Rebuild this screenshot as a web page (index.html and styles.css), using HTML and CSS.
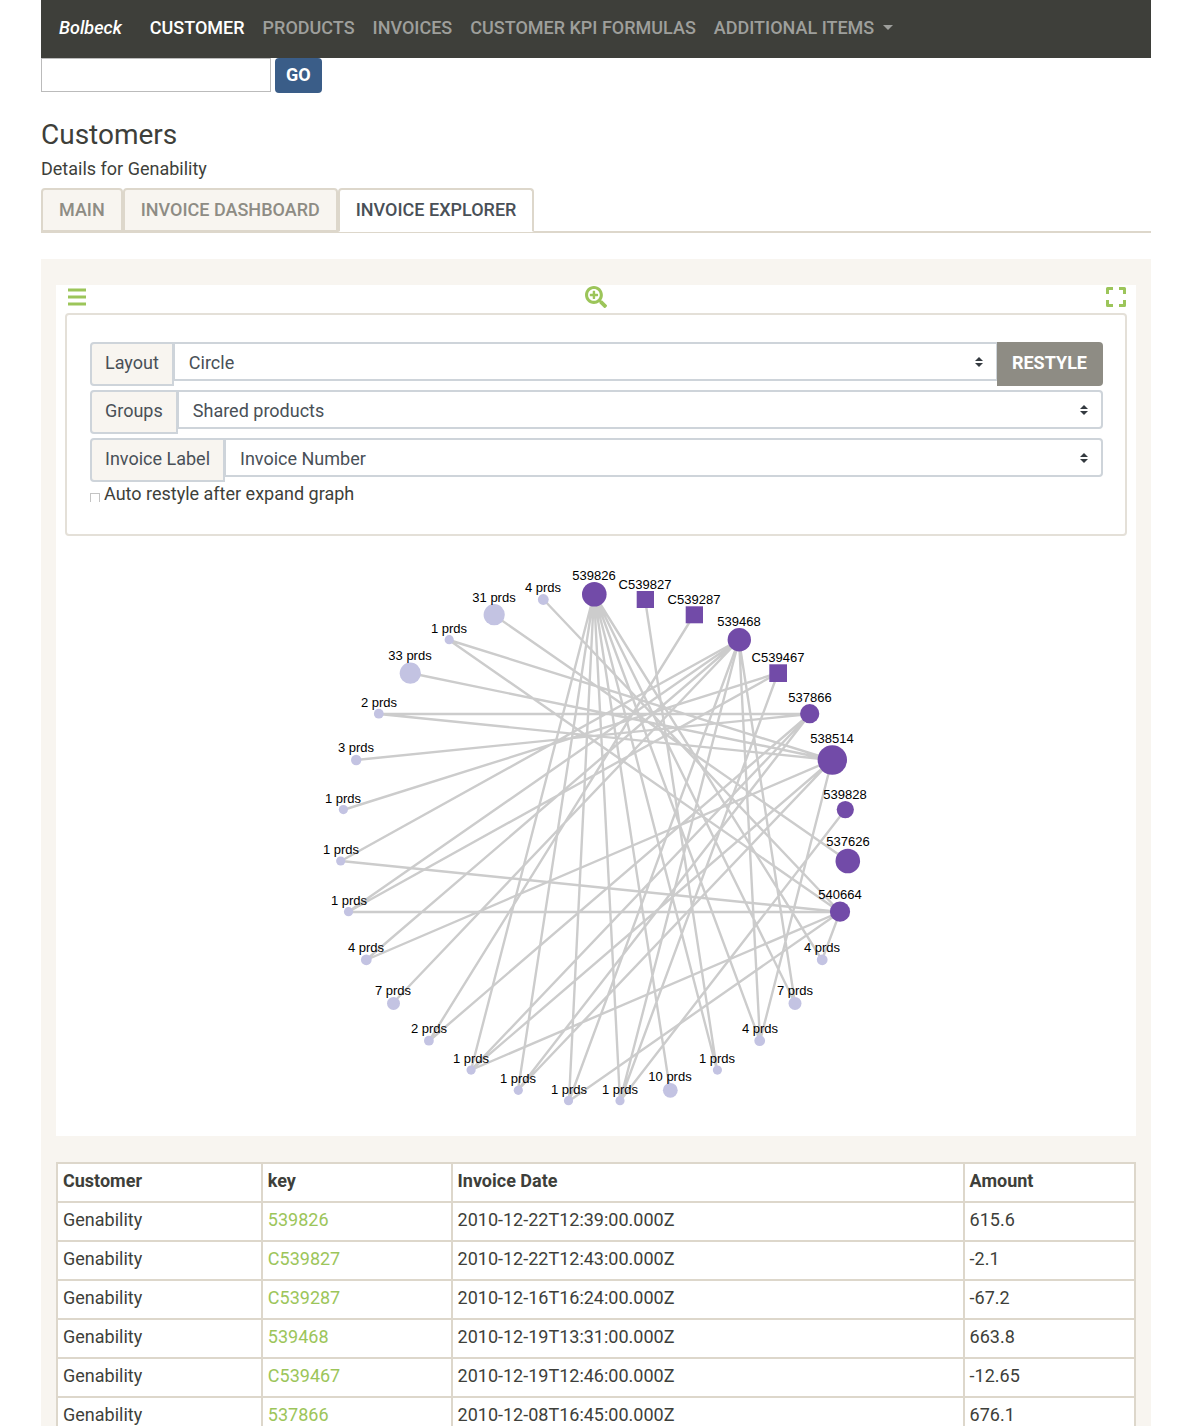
FILE: index.html
```html
<!DOCTYPE html>
<html lang="en">
<head>
<meta charset="utf-8">
<meta name="viewport" content="width=device-width, initial-scale=1">
<title>Bolbeck - Customers</title>
<link rel="stylesheet" href="styles.css">
</head>
<body>
<header>
  <nav class="navbar" aria-label="Main">
    <a class="brand" href="#">Bolbeck</a>
    <a class="nav-link current" href="#">CUSTOMER</a>
    <a class="nav-link" href="#">PRODUCTS</a>
    <a class="nav-link" href="#">INVOICES</a>
    <a class="nav-link" href="#">CUSTOMER KPI FORMULAS</a>
    <a class="nav-link dropdown" href="#">ADDITIONAL ITEMS</a>
  </nav>
  <form class="search">
    <input class="search-box" type="text" aria-label="Search">
    <button class="go" type="button">GO</button>
  </form>
</header>
<main>
  <h1>Customers</h1>
  <p class="subtitle">Details for Genability</p>
  <nav class="tabs" aria-label="Customer views">
    <a class="tab" href="#">MAIN</a>
    <a class="tab" href="#">INVOICE DASHBOARD</a>
    <a class="tab active" href="#">INVOICE EXPLORER</a>
  </nav>
  <section class="panel">
    <div class="explorer">
      <div class="toolbar">
        <button class="tool" type="button" aria-label="Menu"><svg width="18" height="18" viewBox="0 0 18 18"><path d="M0 .5h18v3H0zM0 7.5h18v3H0zM0 14.500h18v3H0z"/></svg></button>
        <button class="tool" type="button" aria-label="Zoom in"><svg width="22" height="22" viewBox="0 0 512 512"><path d="M304 192v32c0 6.600-5.400 12-12 12h-56v56c0 6.600-5.400 12-12 12h-32c-6.600 0-12-5.400-12-12v-56h-56c-6.600 0-12-5.400-12-12v-32c0-6.600 5.400-12 12-12h56v-56c0-6.600 5.400-12 12-12h32c6.600 0 12 5.400 12 12v56h56c6.600 0 12 5.400 12 12zm201 284.700L476.700 505c-9.400 9.400-24.600 9.400-33.900 0L343 405.300c-4.500-4.500-7-10.600-7-17V372c-35.300 27.600-79.700 44-128 44C93.100 416 0 322.900 0 208S93.100 0 208 0s208 93.100 208 208c0 48.300-16.400 92.700-44 128h16.300c6.400 0 12.500 2.500 17 7l99.700 99.700c9.300 9.400 9.300 24.600 0 34zM344 208c0-75.200-60.800-136-136-136S72 132.800 72 208s60.800 136 136 136 136-60.800 136-136z"/></svg></button>
        <button class="tool" type="button" aria-label="Full screen"><svg width="20" height="20" viewBox="0 0 20 20"><path d="M1.500 0H7v3H3v4H0V1.500Q0 0 1.500 0zM13 0h5.500Q20 0 20 1.500V7h-3V3h-4zM0 13h3v4h4v3H1.500Q0 20 0 18.500zM17 13h3v5.500q0 1.500-1.500 1.500H13v-3h4z"/></svg></button>
      </div>
      <form class="options">
        <div class="group">
          <label class="prefix" for="layout">Layout</label>
          <select class="choice" id="layout"><option>Circle</option></select>
          <button class="restyle" type="button">RESTYLE</button>
        </div>
        <div class="group">
          <label class="prefix" for="groups">Groups</label>
          <select class="choice last" id="groups"><option>Shared products</option></select>
        </div>
        <div class="group">
          <label class="prefix" for="label">Invoice Label</label>
          <select class="choice last" id="label"><option>Invoice Number</option></select>
        </div>
        <label class="auto"><input class="tick" type="checkbox">Auto restyle after expand graph</label>
      </form>
      <svg class="graph" viewBox="56 536 1080 600" role="img" aria-label="Invoices and the products they share">
        <g class="edges">
          <path d="M543 599L840 912M494 615L848 861M449 640L832 760M449 640L840 912M410 673L832 760M379 714H810M379 714L832 760M356 760L810 714M343 810L778 673M341 861L739 640M341 861L840 912"/>
          <path d="M348 912L739 640M348 912L778 673M348 912H840M366 960L739 640M366 960L832 760M393 1003L739 640M429 1041L694 615M429 1041L810 714"/>
          <path d="M471 1070L594 594M471 1070L810 714M471 1070L832 760M471 1070L840 912M518 1090L594 594M518 1090L810 714M518 1090L832 760M569 1101L594 594M569 1101L739 640M569 1101L840 912"/>
          <path d="M620 1101L594 594M620 1101L739 640M620 1101L778 673M620 1101L845 810M670 1090L594 594M717 1070L594 594M717 1070L645 599M760 1041L594 594M760 1041L739 640M760 1041L832 760M795 1003L594 594M795 1003L739 640M822 960L594 594M822 960L840 912"/>
        </g>
        <g class="invoices">
          <circle cx="594.300" cy="594.300" r="12.300"/><rect x="636.700" y="591" width="17.300" height="17"/><rect x="685.700" y="606.300" width="17.300" height="17"/>
          <circle cx="739.300" cy="639.700" r="11.700"/><rect x="769.300" y="664.300" width="17.700" height="17.700"/><circle cx="809.700" cy="713.700" r="9.600"/>
          <circle cx="832.300" cy="760" r="14.700"/><circle cx="845.300" cy="809.600" r="8.600"/><circle cx="847.800" cy="861" r="12.300"/><circle cx="840" cy="911.700" r="10.100"/>
        </g>
        <g class="products">
          <circle cx="822.200" cy="959.800" r="5.400"/><circle cx="795" cy="1003.400" r="6.500"/><circle cx="759.700" cy="1040.700" r="5.400"/><circle cx="717.400" cy="1070.100" r="4.600"/>
          <circle cx="670.300" cy="1090.300" r="7.400"/><circle cx="620" cy="1100.700" r="4.600"/><circle cx="568.500" cy="1100.700" r="4.600"/><circle cx="518.300" cy="1090.300" r="4.600"/>
          <circle cx="471.100" cy="1070.100" r="4.600"/><circle cx="428.900" cy="1040.700" r="4.900"/><circle cx="393.500" cy="1003.400" r="6.500"/><circle cx="366.300" cy="959.800" r="5.400"/>
          <circle cx="348.500" cy="911.700" r="4.600"/><circle cx="340.700" cy="861" r="4.600"/><circle cx="343.400" cy="809.600" r="4.600"/><circle cx="356.200" cy="760" r="5.200"/>
          <circle cx="378.800" cy="713.700" r="4.900"/><circle cx="410.300" cy="673.200" r="10.600"/><circle cx="449.200" cy="639.700" r="4.600"/><circle cx="494.200" cy="614.700" r="10.600"/><circle cx="543.300" cy="599.500" r="5.400"/>
        </g>
        <g class="names">
          <text x="594" y="580">539826</text><text x="645" y="589">C539827</text><text x="694" y="604">C539287</text><text x="739" y="626">539468</text>
          <text x="778" y="662">C539467</text><text x="810" y="702">537866</text><text x="832" y="743">538514</text><text x="845" y="799">539828</text>
          <text x="848" y="846">537626</text><text x="840" y="899">540664</text><text x="822" y="952">4 prds</text><text x="795" y="995">7 prds</text>
          <text x="760" y="1033">4 prds</text><text x="717" y="1063">1 prds</text><text x="670" y="1081">10 prds</text><text x="620" y="1094">1 prds</text>
          <text x="569" y="1094">1 prds</text><text x="518" y="1083">1 prds</text><text x="471" y="1063">1 prds</text><text x="429" y="1033">2 prds</text>
          <text x="393" y="995">7 prds</text><text x="366" y="952">4 prds</text><text x="349" y="905">1 prds</text><text x="341" y="854">1 prds</text>
          <text x="343" y="803">1 prds</text><text x="356" y="752">3 prds</text><text x="379" y="707">2 prds</text><text x="410" y="660">33 prds</text>
          <text x="449" y="633">1 prds</text><text x="494" y="602">31 prds</text><text x="543" y="592">4 prds</text>
        </g>
      </svg>
    </div>
    <table class="invoice-table">
      <colgroup><col class="col-customer"><col class="col-key"><col class="col-date"><col></colgroup>
      <thead><tr><th>Customer</th><th>key</th><th>Invoice Date</th><th>Amount</th></tr></thead>
      <tbody>
        <tr><td>Genability</td><td><a href="#">539826</a></td><td>2010-12-22T12:39:00.000Z</td><td>615.6</td></tr>
        <tr><td>Genability</td><td><a href="#">C539827</a></td><td>2010-12-22T12:43:00.000Z</td><td>-2.1</td></tr>
        <tr><td>Genability</td><td><a href="#">C539287</a></td><td>2010-12-16T16:24:00.000Z</td><td>-67.2</td></tr>
        <tr><td>Genability</td><td><a href="#">539468</a></td><td>2010-12-19T13:31:00.000Z</td><td>663.8</td></tr>
        <tr><td>Genability</td><td><a href="#">C539467</a></td><td>2010-12-19T12:46:00.000Z</td><td>-12.65</td></tr>
        <tr><td>Genability</td><td><a href="#">537866</a></td><td>2010-12-08T16:45:00.000Z</td><td>676.1</td></tr>
      </tbody>
    </table>
  </section>
</main>
</body>
</html>
```
FILE: styles.css
```css
*, *::before, *::after { box-sizing: border-box; }

body {
  margin: 0;
  padding: 0 51px 0 41px;
  background: #fff;
  color: #3e3f3a;
  font: 400 18px/27px Roboto, "Liberation Sans", sans-serif;
}

a { color: #9cc55a; text-decoration: none; }
button, input, select { margin: 0; font: inherit; }
button { cursor: pointer; }

.navbar {
  display: flex;
  align-items: center;
  gap: 18px;
  min-height: 58px;
  padding: 0 18px 3px;
  background: #3e3f3a;
  font-weight: 500;
}
.brand { margin-right: 10px; color: #fff; font-style: italic; }
.nav-link { color: #9e9f9c; }
.nav-link.current { color: #fff; }
.dropdown { display: flex; align-items: center; gap: 9px; }
.dropdown::after {
  content: "";
  border: 5px solid transparent;
  border-top-color: currentColor;
  border-bottom: 0;
}

.search { display: flex; align-items: flex-start; gap: 4px; }
.search-box { width: 230px; height: 34px; border: 1px solid #bbb; background: #fff; }
.go {
  height: 35px;
  padding: 0 11px 2px;
  border: 0;
  border-radius: 4px;
  background: #3a5d88;
  color: #fff;
  font-weight: 700;
}

h1 { margin: 25px 0 3px; font-size: 28px; line-height: 34px; font-weight: 400; }
.subtitle { margin: 0 0 6px; }

.tabs { display: flex; border-bottom: 2px solid #ddd7cb; }
.tab {
  padding: 7px 16px;
  border: 2px solid #ddd7cb;
  border-bottom-width: 1px;
  border-radius: 4px 4px 0 0;
  background: #f8f5f0;
  color: #8e8c84;
  font-weight: 500;
  line-height: 26px;
}
.tab.active { margin-bottom: -1px; border-bottom-color: #fff; background: #fff; color: #495057; }

.panel { margin-top: 26px; padding: 26px 15px; background: #f8f5f0; }
.explorer { background: #fff; }
.toolbar { display: flex; align-items: center; justify-content: space-between; height: 28px; padding: 0 10px 4px 12px; }
.tool { display: flex; padding: 0; border: 0; background: none; }
.tool svg { fill: #9cc55a; }

.options {
  margin: 0 9px;
  padding: 27px 22px 32px 23px;
  border: 2px solid #e4e0d8;
  border-radius: 4px;
}
.group { display: flex; align-items: flex-start; margin-bottom: 4px; color: #495057; }
.prefix {
  height: 44px;
  padding: 5px 13px;
  border: 2px solid #ced4da;
  border-radius: 4px 0 0 4px;
  background: #f8f5f0;
}
.choice {
  flex: 1;
  min-width: 0;
  height: 39px;
  margin-left: -1px;
  padding: 2px 28px 0 14px;
  border: 2px solid #ced4da;
  border-radius: 0;
  appearance: none;
  background: #fff url("data:image/svg+xml,%3Csvg xmlns='http://www.w3.org/2000/svg' viewBox='0 0 4 5'%3E%3Cpath fill='%23343a40' d='M2 0L0 2h4zm0 5L0 3h4z'/%3E%3C/svg%3E") no-repeat right 13px center / 8px 10px;
  color: #495057;
}
.choice.last { border-radius: 0 4px 4px 0; }
.restyle {
  height: 44px;
  margin-left: -1px;
  padding: 0 16px 4px 15px;
  border: 0;
  border-radius: 0 4px 4px 0;
  background: #8e8c84;
  color: #fff;
  font-weight: 700;
}
.auto { display: flex; align-items: center; gap: 4px; line-height: 16px; }
.tick {
  width: 10px;
  height: 9px;
  margin-top: 6px;
  border: 1px solid #c4c4c4;
  border-bottom: 0;
  appearance: none;
}
.tick:checked { background: #9cc55a; }

.graph { display: block; width: 100%; }
.edges { fill: none; stroke: #ccc; stroke-width: 2.400; }
.invoices { fill: #724ba8; }
.products { fill: #c3c3e2; }
.names { fill: #000; font: 13px "Liberation Sans", Arial, sans-serif; text-anchor: middle; }

.invoice-table {
  width: 100%;
  margin-top: 26px;
  border-collapse: collapse;
  table-layout: fixed;
  background: #fff;
}
.invoice-table th, .invoice-table td {
  padding: 3px 5px 7px;
  border: 2px solid #ddd7cb;
  text-align: left;
}
.invoice-table th { font-weight: 700; }
.col-customer { width: 19%; }
.col-key { width: 17.600%; }
.col-date { width: 47.500%; }
```
